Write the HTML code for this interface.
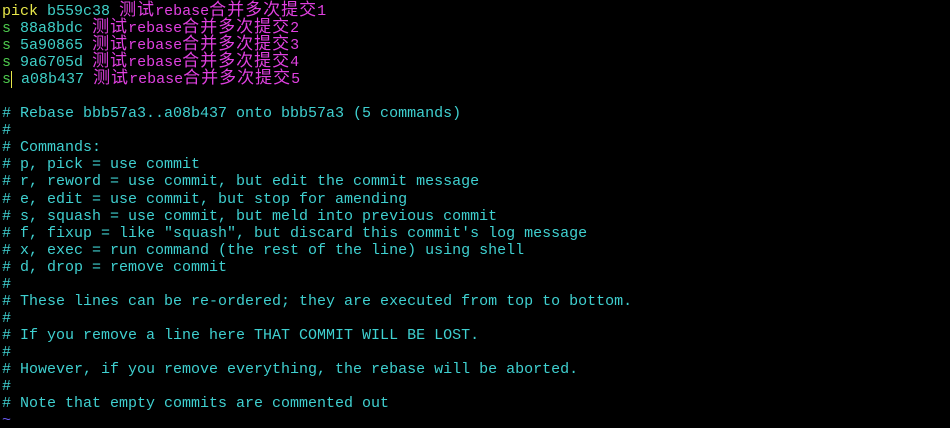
<!DOCTYPE html>
<html><head><meta charset="utf-8"><style>
html,body{margin:0;padding:0;background:#000;width:950px;height:428px;overflow:hidden}
pre{margin:0;padding:3px 0 0 2px;font-family:"Liberation Mono","Noto Sans CJK SC",monospace;font-size:15px;line-height:17.05px;color:#3fd0d0;white-space:pre}
.y{color:#e8e84a}.g{color:#4cc84c}.h{color:#3fd0c8}.m{color:#e040e0}.t{color:#6a5af0}
.k{letter-spacing:1px;font-size:17px;line-height:15px}
.cur{border-left:1px solid #e8e84a}
</style></head><body><pre><span class="y">pick</span> <span class="h">b559c38</span> <span class="m"><span class="k">测试</span>rebase<span class="k">合并多次提交</span>1</span>
<span class="g">s</span> <span class="h">88a8bdc</span> <span class="m"><span class="k">测试</span>rebase<span class="k">合并多次提交</span>2</span>
<span class="g">s</span> <span class="h">5a90865</span> <span class="m"><span class="k">测试</span>rebase<span class="k">合并多次提交</span>3</span>
<span class="g">s</span> <span class="h">9a6705d</span> <span class="m"><span class="k">测试</span>rebase<span class="k">合并多次提交</span>4</span>
<span class="g">s</span><span class="cur"> </span><span class="h">a08b437</span> <span class="m"><span class="k">测试</span>rebase<span class="k">合并多次提交</span>5</span>

# Rebase bbb57a3..a08b437 onto bbb57a3 (5 commands)
#
# Commands:
# p, pick = use commit
# r, reword = use commit, but edit the commit message
# e, edit = use commit, but stop for amending
# s, squash = use commit, but meld into previous commit
# f, fixup = like "squash", but discard this commit's log message
# x, exec = run command (the rest of the line) using shell
# d, drop = remove commit
#
# These lines can be re-ordered; they are executed from top to bottom.
#
# If you remove a line here THAT COMMIT WILL BE LOST.
#
# However, if you remove everything, the rebase will be aborted.
#
# Note that empty commits are commented out
<span class="t">~</span></pre></body></html>
